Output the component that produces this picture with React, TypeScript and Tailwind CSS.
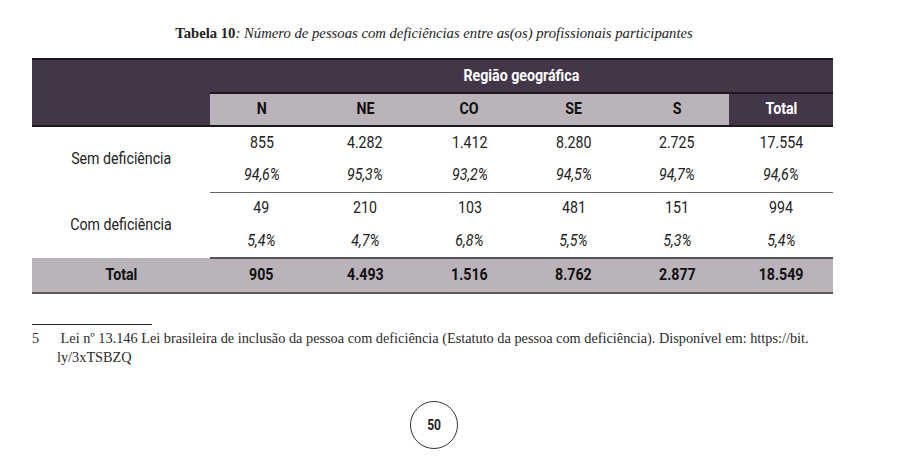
import React from "react";

const regions = ["N", "NE", "CO", "SE", "S"];

const rows = [
  {
    label: "Sem deficiência",
    values: ["855", "4.282", "1.412", "8.280", "2.725", "17.554"],
    percents: ["94,6%", "95,3%", "93,2%", "94,5%", "94,7%", "94,6%"],
  },
  {
    label: "Com deficiência",
    values: ["49", "210", "103", "481", "151", "994"],
    percents: ["5,4%", "4,7%", "6,8%", "5,5%", "5,3%", "5,4%"],
  },
];

const totals = ["905", "4.493", "1.516", "8.762", "2.877", "18.549"];

const colWidths = ["w-[178px]", "w-[103px]", "w-[104px]", "w-[105px]", "w-[103px]", "w-[104px]", "w-[104px]"];

// condensed look: Roboto squeezed horizontally
function C({ children }: { children: React.ReactNode }) {
  return <span className="inline-block scale-x-[0.86] whitespace-nowrap">{children}</span>;
}

export default function App() {
  return (
    <div className="w-[901px] h-[456px] bg-white text-[#1a1a1a] overflow-hidden">
      <h1 className="pt-[23px] pr-[33px] text-center text-[14.7px] leading-[20px] font-['Liberation_Serif',serif] text-[#222]">
        <span className="font-bold">Tabela 10</span>
        <span className="italic">: Número de pessoas com deficiências entre as(os) profissionais participantes</span>
      </h1>

      <div className="mt-[15px] ml-[32px] w-[801px] font-['Roboto',sans-serif] text-[16.5px]">
        <table className="w-[801px] border-collapse table-fixed">
          <colgroup>
            {colWidths.map((w, i) => (
              <col key={i} className={w} />
            ))}
          </colgroup>
          <thead>
            <tr className="h-[34px] bg-[#433649] border-t-2 border-[#1d1820]">
              <th rowSpan={2} className="border-b-2 border-[#1d1820]"></th>
              <th colSpan={6} className="text-white font-bold text-center">
                <C>Região geográfica</C>
              </th>
            </tr>
            <tr className="h-[33px] border-t-2 border-b-2 border-[#1d1820]">
              {regions.map((r) => (
                <th key={r} className="bg-[#bab3ba] text-[#111] font-bold text-center">
                  <C>{r}</C>
                </th>
              ))}
              <th className="bg-[#433649] text-white font-bold text-center">
                <C>Total</C>
              </th>
            </tr>
          </thead>
          <tbody>
            {rows.map((row, ri) => (
              <React.Fragment key={row.label}>
                <tr className="h-[33px]">
                  <td rowSpan={2} className="text-center align-middle text-[#222]">
                    <C>{row.label}</C>
                  </td>
                  {row.values.map((v, i) => (
                    <td key={i} className="text-center text-[#222]">
                      <C>{v}</C>
                    </td>
                  ))}
                </tr>
                <tr className="h-[33px]">
                  {row.percents.map((p, i) => (
                    <td
                      key={i}
                      className={`text-center italic text-[#222] ${
                        ri === 0 ? "border-b border-[#666]" : "border-b-2 border-[#555]"
                      }`}
                    >
                      <C>{p}</C>
                    </td>
                  ))}
                </tr>
              </React.Fragment>
            ))}
            <tr className="h-[35px] bg-[#bab3ba] border-b-2 border-[#5a5a5a]">
              <td className="text-center font-bold text-[#111]">
                <C>Total</C>
              </td>
              {totals.map((t, i) => (
                <td key={i} className="text-center font-bold text-[#111]">
                  <C>{t}</C>
                </td>
              ))}
            </tr>
          </tbody>
        </table>
      </div>

      <div className="mt-[30px] ml-[32px] w-[120px] border-t border-[#222]"></div>
      <div className="mt-[4px] ml-[32px] w-[820px] flex font-['Liberation_Serif',serif] text-[14.3px] leading-[19px] text-[#2a2a2a]">
        <span className="w-[25px] shrink-0">5</span>
        <p>
          &nbsp;Lei nº 13.146 Lei brasileira de inclusão da pessoa com deficiência (Estatuto da pessoa com deficiência). Disponível em: https://bit.
          <br />
          ly/3xTSBZQ
        </p>
      </div>

      <div className="mt-[34px] flex justify-center pr-[33px]">
        <div className="w-[48px] h-[48px] rounded-full border border-[#333] flex items-center justify-center font-['Roboto',sans-serif] font-bold text-[14px] text-[#222]">
          <C>50</C>
        </div>
      </div>
    </div>
  );
}
